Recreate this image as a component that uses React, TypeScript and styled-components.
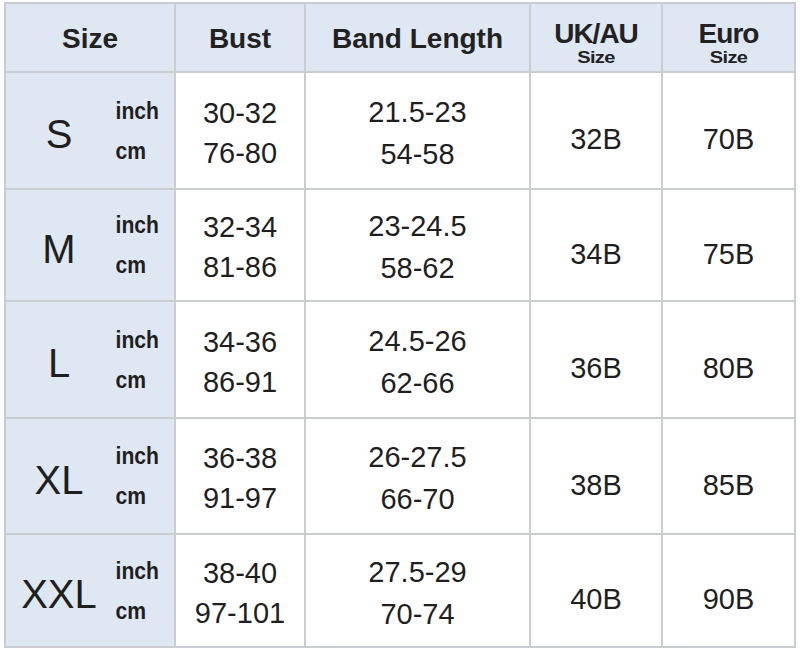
import styled, { createGlobalStyle } from 'styled-components'

const GlobalStyle = createGlobalStyle`
  html, body {
    margin: 0;
    padding: 0;
    background: #ffffff;
  }
  body {
    font-family: 'Liberation Sans', Arial, sans-serif;
    color: #1f1f1f;
  }
`

const Table = styled.div`
  display: grid;
  grid-template-columns: 168px 128px 223px 130px 131px;
  grid-template-rows: 67px 115px 110px 115px 114px 111px;
  gap: 2px;
  padding: 2px;
  margin: 2px 0 0 4px;
  width: fit-content;
  background: #c9ccd1;
`

const Cell = styled.div<{ $tint?: boolean }>`
  display: flex;
  flex-direction: column;
  align-items: center;
  justify-content: center;
  background: ${(p) => (p.$tint ? '#dfe7f3' : '#ffffff')};
`

const HeadText = styled.div`
  font-weight: 700;
  font-size: 28px;
  line-height: 1;
  color: #222;
  margin-top: 2px;
`

const HeadStack = styled.div`
  display: flex;
  flex-direction: column;
  align-items: center;
  font-weight: 700;
  line-height: 1;
  color: #222;
  margin-top: 12px;
`

const HeadMain = styled.span`
  font-size: 28px;
  letter-spacing: -1px;
`

const HeadSub = styled.span`
  font-size: 20px;
  letter-spacing: -0.6px;
  transform: scaleY(0.85);
  margin-top: -1px;
`

const SizeCell = styled.div`
  display: grid;
  grid-template-columns: 106px 1fr;
  align-items: center;
  background: #dfe7f3;
`

const SizeLetter = styled.div`
  font-size: 40px;
  text-align: center;
  padding-top: 8px;
`

const Units = styled.div`
  display: flex;
  flex-direction: column;
  font-weight: 700;
  font-size: 24px;
  line-height: 40px;
  padding-left: 4px;
  transform: scaleX(0.88);
  transform-origin: left center;
`

const Lines = styled.div<{ $gap: number }>`
  display: flex;
  flex-direction: column;
  align-items: center;
  font-size: 29px;
  line-height: ${(p) => p.$gap}px;
  padding-top: 4px;
`

const Single = styled.div`
  font-size: 29px;
  line-height: 1;
  padding-top: 18px;
`

const rows = [
  { size: 'S', bust: ['30-32', '76-80'], band: ['21.5-23', '54-58'], uk: '32B', eu: '70B' },
  { size: 'M', bust: ['32-34', '81-86'], band: ['23-24.5', '58-62'], uk: '34B', eu: '75B' },
  { size: 'L', bust: ['34-36', '86-91'], band: ['24.5-26', '62-66'], uk: '36B', eu: '80B' },
  { size: 'XL', bust: ['36-38', '91-97'], band: ['26-27.5', '66-70'], uk: '38B', eu: '85B' },
  { size: 'XXL', bust: ['38-40', '97-101'], band: ['27.5-29', '70-74'], uk: '40B', eu: '90B' },
]

export default function App() {
  return (
    <>
      <GlobalStyle />
      <Table>
        <Cell $tint>
          <HeadText>Size</HeadText>
        </Cell>
        <Cell $tint>
          <HeadText>Bust</HeadText>
        </Cell>
        <Cell $tint>
          <HeadText>Band Length</HeadText>
        </Cell>
        <Cell $tint>
          <HeadStack>
            <HeadMain>UK/AU</HeadMain>
            <HeadSub>Size</HeadSub>
          </HeadStack>
        </Cell>
        <Cell $tint>
          <HeadStack>
            <HeadMain>Euro</HeadMain>
            <HeadSub>Size</HeadSub>
          </HeadStack>
        </Cell>

        {rows.map((r) => (
          <>
            <SizeCell key={r.size + '-s'}>
              <SizeLetter>{r.size}</SizeLetter>
              <Units>
                <span>inch</span>
                <span>cm</span>
              </Units>
            </SizeCell>
            <Cell key={r.size + '-b'}>
              <Lines $gap={40}>
                <span>{r.bust[0]}</span>
                <span>{r.bust[1]}</span>
              </Lines>
            </Cell>
            <Cell key={r.size + '-l'}>
              <Lines $gap={42}>
                <span>{r.band[0]}</span>
                <span>{r.band[1]}</span>
              </Lines>
            </Cell>
            <Cell key={r.size + '-u'}>
              <Single>{r.uk}</Single>
            </Cell>
            <Cell key={r.size + '-e'}>
              <Single>{r.eu}</Single>
            </Cell>
          </>
        ))}
      </Table>
    </>
  )
}
